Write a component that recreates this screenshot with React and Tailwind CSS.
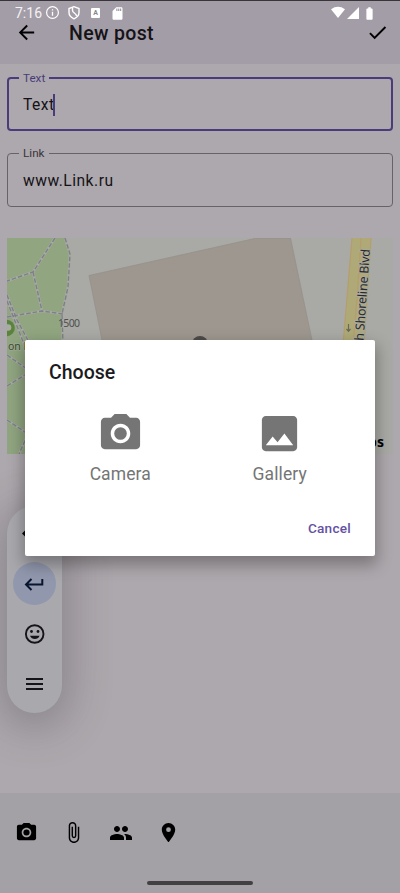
import React from "react";
import { MdCameraAlt, MdImage, MdArrowBack, MdCheck, MdPeople, MdPlace, MdAttachFile, MdSdCard, MdBatteryFull } from "react-icons/md";

function StatusBar() {
  return (
    <div className="flex h-[19px] items-center border-t border-[#37353a] pl-[15px] pt-[6px] text-white">
      <span className="w-[27px] whitespace-nowrap text-[14px] leading-[14px] text-[#f3f1f4]">7:16</span>
      <svg className="ml-[4px] size-[14px]" viewBox="0 0 14 14" fill="none" stroke="currentColor">
        <circle cx="6.5" cy="6.5" r="5.9" strokeWidth="1.2" />
        <path d="M6.500 5.800v4M6.500 3.300v1.300" strokeWidth="1.300" />
      </svg>
      <svg className="ml-[7px] size-[14px]" viewBox="0 0 14 14" fill="none" stroke="currentColor" strokeWidth="1.4">
        <path d="M7 .7 2 2.500v4.100c0 2.800 2 5 5 6.200 3-1.200 5-3.400 5-6.200V2.500z" />
        <path d="M5.500 1.500v3c0 2.500 4 2.500 4 5.500" />
      </svg>
      <span className="ml-[10px] flex h-[10px] w-[9px] items-center justify-center rounded-[1px] bg-white text-[7px] font-bold leading-none text-[#8b8690]">A</span>
      <MdSdCard className="ml-[10px] size-[15px]" />
      <svg className="ml-[206px] size-[14px]" viewBox="0 0 14 14" fill="currentColor">
        <path d="M0 3.200Q7-1.600 14 3.200L7 12z" />
      </svg>
      <svg className="ml-[2px] size-[12px]" viewBox="0 0 12 12" fill="currentColor">
        <path d="M12 0v12H0z" />
      </svg>
      <MdBatteryFull className="ml-[3px] h-[15px] w-[15px]" />
    </div>
  );
}

function Field({ label, value, focused }) {
  return (
    <fieldset
      className={
        focused
          ? "h-[59px] rounded-[4px] border-2 border-[#483c7a] pl-[10px]"
          : "h-[60px] rounded-[4px] border border-[#67626a] pl-[11px]"
      }
    >
      <legend className={focused ? "h-[12px] px-[4px] text-[11.7px] leading-[12px] text-[#483c7a]" : "h-[12px] px-[4px] text-[11.7px] leading-[12px] text-[#38343b]"}>
        {label}
      </legend>
      <div className={focused ? "flex h-[43px] items-center pl-[4px] pt-px text-[15.6px] tracking-[0.5px] text-[#141217]" : "flex h-[45px] items-center pl-[4px] text-[15.6px] tracking-[0.5px] text-[#141217]"}>
        <span>{value}</span>
        {focused && <span className="-ml-[2px] -mt-[2px] h-[22px] w-[2px] bg-[#483c7a]" />}
      </div>
    </fieldset>
  );
}

function MapView() {
  return (
    <svg className="block h-[216px] w-[386px]" viewBox="7 238 386 216">
      <rect x="7" y="238" width="386" height="216" fill="#a9aaa5" />
      <path d="M7 238h58l5 15-2 34-6 27 1 30-1 110H7z" fill="#90a580" />
      <path d="M89 275.500 257 238h33.500L313 345H103z" fill="#9d978f" stroke="#96908a" strokeWidth=".8" />
      <g fill="none">
        <g stroke="#a6aaa1" strokeWidth="2.600">
          <path d="M55 238 33 272 7 281M65 238l5 16-2 33-6 27 1 30M33 272l9 39M7 317l35-6 21 3M7 295l10 25 13 24M7 301l17 43M7 386l21-13M7 355l20 14M7 420l21 14-9 20" />
        </g>
        <g stroke="#7e8087" strokeWidth="1.400" strokeDasharray="4.500 2">
          <path d="M55 238 33 272 7 281M65 238l5 16-2 33-6 27 1 30M33 272l9 39M7 317l35-6 21 3M7 295l10 25 13 24M7 301l17 43M7 386l21-13M7 355l20 14M7 420l21 14-9 20" />
        </g>
      </g>
      <path d="M352 238h19l-9 107h-19z" fill="#afa978" />
      <path d="m352 238-5 60-4 47M371 238l-3 45-4 62M361 238l-4 60-4 47" fill="none" stroke="#b59e6d" strokeWidth="1.200" />
      <path d="M348.500 324v7m-2-2 2 2.300 2-2.300" fill="none" stroke="#686958" strokeWidth="1.200" />
      <circle cx="6.500" cy="328" r="8.300" fill="#5b833d" />
      <circle cx="8" cy="327.500" r="3.300" fill="#a8ae9f" />
      <circle cx="200" cy="344" r="8" fill="#4d4a48" />
      <g fontFamily="Noto Sans, sans-serif">
        <text x="58" y="327" fontSize="10.500" textLength="22" fill="#4f504f">1500</text>
        <text x="8" y="350" fontSize="10.500" fill="#345020" stroke="#a5aa9f" strokeWidth="1.500" paintOrder="stroke">on Park</text>
        <text transform="translate(363.500 341) rotate(-86)" x="0" y="0" fontSize="12.500" textLength="92" fill="#29292d" stroke="#aaa99b" strokeWidth="2" paintOrder="stroke">h Shoreline Blvd</text>
        <text x="384" y="447" textAnchor="end" fontSize="14" fontWeight="700" fill="#000">Maps</text>
      </g>
    </svg>
  );
}

function KeyboardTools() {
  return (
    <div className="absolute left-[7px] top-[506px] flex h-[207px] w-[55px] flex-col items-center rounded-[28px] bg-[#a9a8ad] shadow-[0_8px_42px_8px_rgba(60,54,58,0.3)]">
      <svg className="mt-[15px] h-[24px] w-[26px]" viewBox="0 0 26 24" fill="none" stroke="#050507" strokeWidth="2.200">
        <path d="m6 8-4.500 4.500L6 17M20 8l4.500 4.500L20 17" />
      </svg>
      <div className="mt-[17px] flex size-[43px] items-center justify-center rounded-full bg-[#9197ad]">
        <svg className="-ml-px h-[14px] w-[20px]" viewBox="0 0 20 14" fill="none" stroke="#07152f" strokeWidth="2">
          <path d="M18.300 2v5.500H2.500M7.500 2 2 7.500 7.500 13" />
        </svg>
      </div>
      <svg className="mt-[17px] size-[24px]" viewBox="0 0 24 24" fill="none" stroke="#151518" strokeWidth="1.900">
        <circle cx="11.700" cy="12" r="8.800" />
        <circle cx="8.500" cy="9.500" r="1.400" fill="#151518" stroke="none" />
        <circle cx="15" cy="9.500" r="1.400" fill="#151518" stroke="none" />
        <path d="M7 13.800h9.600c-1.600 4.400-8 4.400-9.600 0z" fill="#151518" stroke="none" />
      </svg>
      <div className="mt-[32px] flex w-[17px] flex-col gap-[3px]">
        <span className="h-[2px] bg-[#151518]" />
        <span className="h-[2px] bg-[#151518]" />
        <span className="h-[2px] bg-[#151518]" />
      </div>
    </div>
  );
}

function Choice({ icon: Icon, label }) {
  return (
    <button className="flex flex-1 flex-col items-center text-[17.5px] leading-[23px] text-[#757575]">
      <Icon className="size-[47px]" />
      <span className="mt-[6px] tracking-[0.1px]">{label}</span>
    </button>
  );
}

function ChooseDialog() {
  return (
    <div className="absolute left-[25px] top-[340px] flex h-[216px] w-[350px] flex-col rounded-[2px] bg-white shadow-[0_7px_16px_2px_rgba(0,0,0,0.3)]">
      <h2 className="pl-[24px] pt-[20px] text-[19.5px] font-medium leading-[26px] text-[#1b1b1e]">Choose</h2>
      <div className="mt-[24px] flex pl-[15.5px] pr-[15.5px]">
        <Choice icon={MdCameraAlt} label="Camera" />
        <Choice icon={MdImage} label="Gallery" />
      </div>
      <button className="mr-[24px] mt-[32px] self-end text-[13.6px] font-medium leading-[20px] tracking-[0.25px] text-[#6451a2]">Cancel</button>
    </div>
  );
}

export default function App() {
  return (
    <div className="relative flex h-[893px] w-[400px] flex-col overflow-hidden bg-[#ada8ad] font-[Roboto,sans-serif]">
      <header className="h-[64px] bg-[#a39da7]">
        <StatusBar />
        <div className="flex h-[27px] items-center px-[15px] text-black">
          <MdArrowBack className="size-[23px]" />
          <h1 className="ml-[31px] flex-1 pt-[2px] text-[19.5px] font-medium tracking-[0.35px] text-[#151318]">New post</h1>
          <MdCheck className="-mr-[4px] size-[23px]" />
        </div>
      </header>
      <main className="flex flex-1 flex-col px-[7px] pt-[8px]">
        <Field label="Text" value="Text" focused />
        <div className="mt-[16px]">
          <Field label="Link" value="www.Link.ru" />
        </div>
        <div className="mt-[31px]">
          <MapView />
        </div>
      </main>
      <KeyboardTools />
      <footer className="flex h-[100px] flex-col bg-[#a3a0a6]">
        <div className="flex gap-[24px] pl-[15px] pt-[28px] text-black">
          <MdCameraAlt className="size-[23px]" />
          <MdAttachFile className="size-[23px]" />
          <MdPeople className="size-[24px]" />
          <MdPlace className="size-[23px]" />
        </div>
        <div className="mx-auto mt-[36px] h-[4px] w-[106px] rounded-full bg-[#434044]" />
      </footer>
      <ChooseDialog />
    </div>
  );
}
